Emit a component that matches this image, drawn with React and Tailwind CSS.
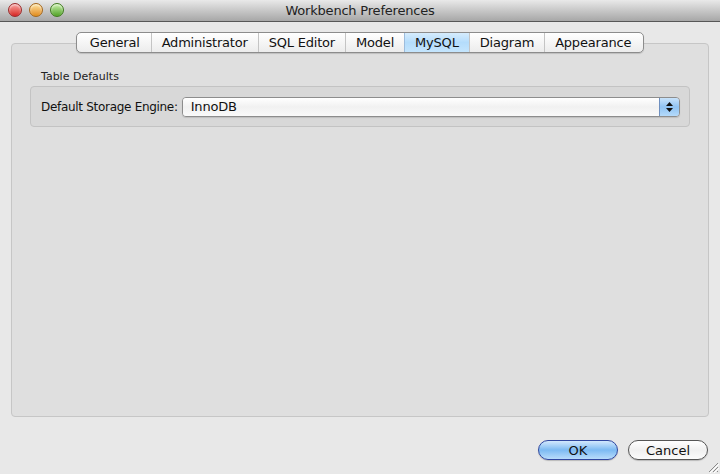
import React from 'react';

const tabs = ['General', 'Administrator', 'SQL Editor', 'Model', 'MySQL', 'Diagram', 'Appearance'];

const Light = ({ from, to, ring }) => (
  <div
    className={`w-[14px] h-[14px] rounded-full border ${ring} bg-gradient-to-b ${from} ${to} shadow-[inset_0_1px_2px_rgba(255,255,255,0.7)]`}
  />
);

function TitleBar() {
  return (
    <div className="relative h-[22px] shrink-0 flex items-center justify-center bg-gradient-to-b from-[#e9e9e9] to-[#a7a7a7] border-b border-[#575757]">
      <div className="absolute left-[8px] top-[3px] flex gap-[7px]">
        <Light from="from-[#f7a0a0]" to="to-[#d5161c]" ring="border-[#9a2b2b]" />
        <Light from="from-[#fde29a]" to="to-[#e08a06]" ring="border-[#a4661c]" />
        <Light from="from-[#c9f0a8]" to="to-[#4ea21c]" ring="border-[#3f7a1f]" />
      </div>
      <span className="text-[13px] tracking-[-0.2px] text-[#222] leading-none">Workbench Preferences</span>
    </div>
  );
}

function TabStrip() {
  return (
    <div className="relative z-10 flex justify-center">
      <div className="flex h-[21px] rounded-[5px] border border-[#8c8c8c] bg-gradient-to-b from-white to-[#ececec] shadow-[0_1px_1px_rgba(0,0,0,0.15)] overflow-hidden">
        {tabs.map((t, i) => {
          const selected = t === 'MySQL';
          const pad = i === 0 ? 'pl-[13px] pr-[11px]' : i === tabs.length - 1 ? 'pl-[10px] pr-[12px]' : 'px-[10px]';
          return (
            <div
              key={t}
              className={`flex items-center text-[13px] tracking-[-0.2px] leading-none text-[#111] ${pad} ${
                i > 0 ? 'border-l border-[#c4c4c4]' : ''
              } ${selected ? 'bg-gradient-to-b from-[#d6ecfd] via-[#b4dcfb] to-[#c4e5fd] border-l-[#9dbcdc]' : ''}`}
            >
              {t}
            </div>
          );
        })}
      </div>
    </div>
  );
}

function PopUp() {
  return (
    <div className="flex-1 flex h-[20px] rounded-[4px] border border-[#8d8d8d] overflow-hidden shadow-[0_1px_1px_rgba(0,0,0,0.12)]">
      <div className="flex-1 flex items-center pl-[8px] text-[13px] tracking-[-0.2px] text-[#111] bg-gradient-to-b from-white via-[#f1f1f1] to-[#fafafa]">
        InnoDB
      </div>
      <div className="w-[20px] flex flex-col items-center justify-center gap-[2px] border-l border-[#6e8fbf] bg-gradient-to-b from-[#c9e3fb] via-[#8fc3f3] to-[#b5dafa]">
        <svg width="7" height="4" viewBox="0 0 7 4"><path d="M3.5 0L7 4H0z" fill="#111" /></svg>
        <svg width="7" height="4" viewBox="0 0 7 4"><path d="M0 0h7L3.5 4z" fill="#111" /></svg>
      </div>
    </div>
  );
}

function Grip() {
  return (
    <svg className="absolute right-[1px] bottom-[1px]" width="12" height="12" viewBox="0 0 12 12">
      <path d="M11 2L2 11M11 6L6 11M11 10L10 11" stroke="#8a8a8a" strokeWidth="1" />
      <path d="M12 3L3 12M12 7L7 12" stroke="#fff" strokeWidth="1" />
    </svg>
  );
}

export default function App() {
  return (
    <div
      className="relative w-[720px] h-[474px] flex flex-col bg-[#e8e8e8] overflow-hidden"
      style={{ fontFamily: '"DejaVu Sans", Verdana, sans-serif' }}
    >
      <TitleBar />
      <div className="flex-1 flex flex-col px-[11px] pt-[10px]">
        <TabStrip />
        <div className="-mt-[10px] h-[374px] rounded-[4px] border border-[#c6c6c6] bg-[#dfdfdf] px-[18px] pt-[27px]">
          <div className="pl-[11px] text-[11px] leading-none text-[#222] mb-[4px]">Table Defaults</div>
          <div className="h-[41px] flex items-center gap-[4px] rounded-[4px] border border-[#c3c3c3] bg-[#d8d8d8] pl-[10px] pr-[9px]">
            <span className="text-[12px] tracking-[-0.3px] text-[#111] whitespace-nowrap">Default Storage Engine:</span>
            <PopUp />
          </div>
        </div>
        <div className="flex justify-end gap-[10px] mt-[23px] pr-[1px]">
          <button className="w-[80px] h-[20px] rounded-full border border-[#2f47a0] bg-gradient-to-b from-[#d2e8fd] via-[#7cbaf2] to-[#b8dcfb] text-[13px] leading-none text-[#111] shadow-[0_1px_1px_rgba(0,0,0,0.2)]">
            OK
          </button>
          <button className="w-[80px] h-[20px] rounded-full border border-[#555] bg-gradient-to-b from-white via-[#f0f0f0] to-[#fbfbfb] text-[13px] leading-none text-[#111] shadow-[0_1px_1px_rgba(0,0,0,0.2)]">
            Cancel
          </button>
        </div>
      </div>
      <Grip />
    </div>
  );
}
